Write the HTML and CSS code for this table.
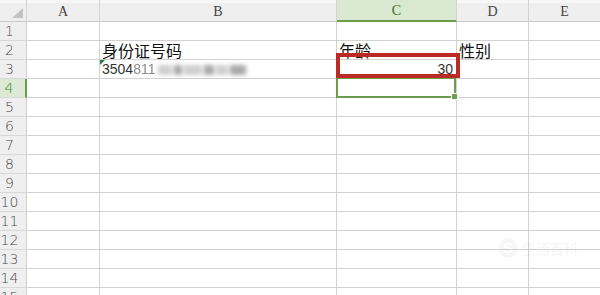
FILE: index.html
```html
<!DOCTYPE html>
<html lang="zh-CN">
<head>
    <meta charset="UTF-8">
    <title>工作表</title>
    <link rel="stylesheet" href="styles.css">
</head>
<body>
    <div class="sheet">
        <!-- header row -->
        <div class="cell head corner"><span class="corner-mark"></span></div>
        <div class="cell head col">A</div>
        <div class="cell head col">B</div>
        <div class="cell head col active-col">C</div>
        <div class="cell head col">D</div>
        <div class="cell head col">E</div>

        <div class="cell rowhead">1</div><div class="cell"></div><div class="cell"></div><div class="cell"></div><div class="cell"></div><div class="cell"></div>

        <div class="cell rowhead">2</div>
        <div class="cell"></div>
        <div class="cell"><span class="txt cjk">身份证号码</span></div>
        <div class="cell"><span class="txt cjk">年龄</span></div>
        <div class="cell"><span class="txt cjk">性别</span></div>
        <div class="cell"></div>

        <div class="cell rowhead">3</div>
        <div class="cell"></div>
        <div class="cell err">
            <span class="txt num">3504<span class="soft">811</span><span class="masked"><i class="blot w14"></i><i class="blot w8 dark"></i><i class="blot w18"></i><i class="blot w10 dark"></i><i class="blot w12"></i><i class="blot w16 dark"></i></span></span>
        </div>
        <div class="cell right"><span class="txt num">30</span></div>
        <div class="cell"></div>
        <div class="cell"></div>

        <div class="cell rowhead active-row">4</div><div class="cell"></div><div class="cell"></div><div class="cell"></div><div class="cell"></div><div class="cell"></div>
        <div class="cell rowhead">5</div><div class="cell"></div><div class="cell"></div><div class="cell"></div><div class="cell"></div><div class="cell"></div>
        <div class="cell rowhead">6</div><div class="cell"></div><div class="cell"></div><div class="cell"></div><div class="cell"></div><div class="cell"></div>
        <div class="cell rowhead">7</div><div class="cell"></div><div class="cell"></div><div class="cell"></div><div class="cell"></div><div class="cell"></div>
        <div class="cell rowhead">8</div><div class="cell"></div><div class="cell"></div><div class="cell"></div><div class="cell"></div><div class="cell"></div>
        <div class="cell rowhead">9</div><div class="cell"></div><div class="cell"></div><div class="cell"></div><div class="cell"></div><div class="cell"></div>
        <div class="cell rowhead">10</div><div class="cell"></div><div class="cell"></div><div class="cell"></div><div class="cell"></div><div class="cell"></div>
        <div class="cell rowhead">11</div><div class="cell"></div><div class="cell"></div><div class="cell"></div><div class="cell"></div><div class="cell"></div>
        <div class="cell rowhead">12</div><div class="cell"></div><div class="cell"></div><div class="cell"></div><div class="cell"></div><div class="cell"></div>
        <div class="cell rowhead">13</div><div class="cell"></div><div class="cell"></div><div class="cell"></div><div class="cell"></div><div class="cell"></div>
        <div class="cell rowhead">14</div><div class="cell"></div><div class="cell"></div><div class="cell"></div><div class="cell"></div><div class="cell"></div>
        <div class="cell rowhead">15</div><div class="cell"></div><div class="cell"></div><div class="cell"></div><div class="cell"></div><div class="cell"></div>

        <!-- overlays: current cell and the highlight box -->
        <div class="selection"><span class="handle"></span></div>
        <div class="mark-box"></div>

        <div class="watermark"><span class="wm-logo">S</span><span class="wm-text">生活百科</span></div>
    </div>
</body>
</html>
```

FILE: styles.css
```css
html, body {
    margin: 0;
    padding: 0;
    background: #fff;
    overflow: hidden;
}

.sheet {
    position: relative;
    display: grid;
    grid-template-columns: 27px 73px 237px 120px 72px 72px;
    grid-template-rows: 22px repeat(15, 19px);
    width: 601px;
    font-family: "Liberation Sans", Arial, sans-serif;
    color: #222;
}

.cell {
    box-sizing: border-box;
    border-right: 1px solid #d2d2d2;
    border-bottom: 1px solid #d2d2d2;
    display: flex;
    align-items: flex-end;
    position: relative;
    min-width: 0;
    overflow: visible;
    white-space: nowrap;
}

.head {
    background: linear-gradient(#f7f7f7 0, #f7f7f7 3px, #efefef 3px);
    border-right-color: #d4d4d4;
    border-bottom-color: #c9c9c9;
    justify-content: center;
    align-items: center;
    font-family: "Liberation Serif", "Times New Roman", serif;
    font-size: 14px;
    color: #444;
    padding-top: 2px;
}

.active-col {
    background: #d9e8d0;
    border-bottom: 2px solid #6e9c4f;
    color: #3f6a2a;
}

.corner-mark {
    position: absolute;
    left: 12px;
    top: 8px;
    width: 0;
    height: 0;
    border-left: 11px solid transparent;
    border-bottom: 10px solid #c3c3c3;
}

.rowhead {
    background: #efefef;
    border-right-color: #cfcfcf;
    border-bottom-color: #d8d8d8;
    justify-content: center;
    align-items: center;
    padding-right: 7px;
    font-family: "DejaVu Sans", sans-serif;
    font-weight: 300;
    font-size: 14px;
    color: #4a4a4a;
}

.active-row {
    background: #dce9d4;
    border-right: 2px solid #6e9c4f;
    color: #4d8433;
}

.txt {
    padding-left: 2px;
    line-height: 18px;
}

.cjk {
    font-family: "Noto Sans CJK SC", sans-serif;
    font-size: 16px;
    line-height: 17px;
    color: #111;
}

.num {
    font-size: 14px;
    line-height: 17px;
    color: #333;
    display: inline-flex;
    align-items: center;
}

.right {
    justify-content: flex-end;
}

.right .txt {
    padding-right: 3px;
}

/* small green flag for a number stored as text */
.err::before {
    content: "";
    position: absolute;
    left: 0;
    top: 0;
    border-top: 5px solid #2f7a33;
    border-right: 5px solid transparent;
}

.soft {
    color: #8a8a8a;
    filter: blur(0.6px);
}

/* the rest of the number is pixelated out */
.masked {
    display: inline-flex;
    align-items: center;
    margin-left: 3px;
    filter: blur(2px);
}

.blot {
    display: inline-block;
    height: 10px;
    margin-right: 2px;
    background: #cfcfcf;
}

.blot.dark {
    background: #a9a9a9;
}

.w8 { width: 8px; }
.w10 { width: 10px; }
.w12 { width: 12px; }
.w14 { width: 14px; }
.w16 { width: 16px; }
.w18 { width: 18px; }

.selection {
    position: absolute;
    left: 336px;
    top: 77px;
    width: 120px;
    height: 21px;
    box-sizing: border-box;
    border: 2px solid #6e9c4f;
    pointer-events: none;
}

.handle {
    position: absolute;
    right: -3px;
    bottom: -3px;
    width: 5px;
    height: 5px;
    background: #6e9c4f;
    border: 1px solid #fff;
    box-sizing: content-box;
    transform: translate(1px, 1px);
}

.mark-box {
    position: absolute;
    left: 336px;
    top: 53px;
    width: 124px;
    height: 25px;
    box-sizing: border-box;
    border: 4px solid #bb2a24;
    pointer-events: none;
}

.watermark {
    position: absolute;
    left: 498px;
    top: 238px;
    display: flex;
    align-items: center;
    gap: 4px;
    opacity: 0.04;
    pointer-events: none;
}

.wm-logo {
    width: 20px;
    height: 20px;
    border-radius: 50%;
    background: #555;
    color: #fff;
    font-weight: bold;
    font-size: 15px;
    text-align: center;
    line-height: 20px;
}

.wm-text {
    font-family: "Noto Sans CJK SC", sans-serif;
    font-size: 14px;
    font-weight: bold;
    color: #555;
}
```
